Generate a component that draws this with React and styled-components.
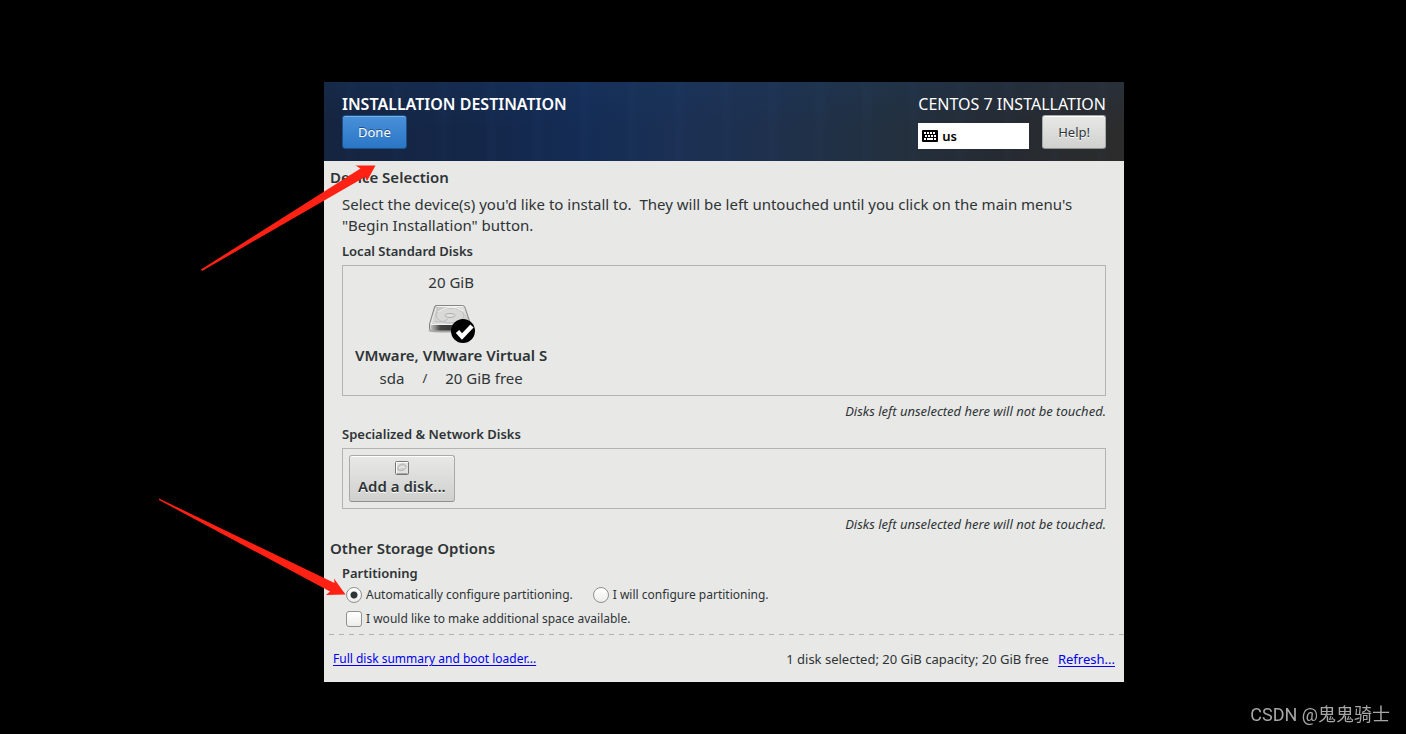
import React, { useState } from "react";
import styled, { createGlobalStyle } from "styled-components";

function DiskIcon() {
  return (
    <svg width="48" height="40" viewBox="0 0 48 40" aria-hidden="true">
      <defs>
        <linearGradient id="diskTop" x1="0" y1="0" x2="1" y2="1">
          <stop offset="0" stopColor="#b9b9b8" />
          <stop offset="0.5" stopColor="#e2e2e1" />
          <stop offset="1" stopColor="#b5b5b4" />
        </linearGradient>
        <linearGradient id="diskFront" x1="0" y1="0" x2="1" y2="0">
          <stop offset="0" stopColor="#c4c4c4" />
          <stop offset="0.12" stopColor="#8a8a8a" />
          <stop offset="0.25" stopColor="#444" />
          <stop offset="0.5" stopColor="#3a3a3a" />
          <stop offset="1" stopColor="#8a8a8a" />
        </linearGradient>
      </defs>
      <ellipse cx="23" cy="28" rx="22" ry="2" fill="#000" opacity="0.15" />
      <path d="M9 2.5H35.5Q37 2.5 37.8 4L43.5 21V26Q43.5 28 41.5 28H4.5Q2.5 28 2.5 26V21L7.5 4Q8 2.5 9 2.5Z" fill="url(#diskTop)" stroke="#858585" />
      <path d="M3.5 22H43V26Q43 27.5 41.5 27.5H5Q3.5 27.5 3.5 26Z" fill="url(#diskFront)" />
      <path d="M9.5 3.5H35.5" stroke="#fff" opacity="0.8" />
      <path d="M9 5L4 21.5H42" fill="none" stroke="#f0f0f0" />
      <ellipse cx="23" cy="12.5" rx="14" ry="7.5" fill="#d9d9d8" stroke="#bdbdbd" />
      <path d="M11 9Q23 0 36 8" fill="none" stroke="#f4f4f4" />
      <ellipse cx="23" cy="12.5" rx="5" ry="2" fill="#e2e2e2" stroke="#adadad" />
      <path d="M8 18Q15 21 21 16" fill="none" stroke="#bbb" />
      <circle cx="36" cy="28" r="12" fill="#000" />
      <path d="M30.5 28.5L35 33.5L45 23" fill="none" stroke="#fff" strokeWidth="4.5" />
    </svg>
  );
}

function SmallDiskIcon() {
  return (
    <svg width="16" height="16" viewBox="0 0 16 16" aria-hidden="true">
      <rect x="1.5" y="1.5" width="13" height="13" rx="1" fill="#e2e2e1" stroke="#777" />
      <path d="M2.5 13.5V2.5H13.5" fill="none" stroke="#fff" />
      <path d="M3 13.5H13.5" stroke="#a5a5a5" />
      <path d="M4 10C3 6 6 4 9 4C12 4 13 7 11 9C9 11 6 11 4 10Z" fill="#d0d0cf" stroke="#b5b5b5" />
      <path d="M5 8L9 6.5L11 8" fill="none" stroke="#f7f7f7" />
    </svg>
  );
}

function KeyboardIcon() {
  return (
    <svg width="16" height="12" viewBox="0 0 16 12" aria-hidden="true">
      <rect width="16" height="12" rx="1" fill="#000" />
      <path
        d="M2 2h2v2H2zM5 2h2v2H5zM8 2h2v2H8zM11 2h2v2h-2zM3 5h2v2H3zM6 5h2v2H6zM9 5h2v2H9zM12 5h2v2h-2zM2 8h2v2H2zM5 8h6v2H5zM12 8h2v2h-2z"
        fill="#fff"
        shapeRendering="crispEdges"
      />
    </svg>
  );
}

function App() {
  const [mode, setMode] = useState("auto");
  const [extraSpace, setExtraSpace] = useState(false);

  return (
    <Page>
      <GlobalStyle />
      <Installer>
        <Header>
          <HeaderSide>
            <ScreenTitle>INSTALLATION DESTINATION</ScreenTitle>
            <Button $primary>Done</Button>
          </HeaderSide>
          <HeaderSide>
            <ProductName>CENTOS 7 INSTALLATION</ProductName>
            <HeaderTools>
              <Keyboard>
                <KeyboardIcon />
                us
              </Keyboard>
              <Button>Help!</Button>
            </HeaderTools>
          </HeaderSide>
        </Header>

        <Content>
          <Heading>Device Selection</Heading>
          <Intro>
            Select the device(s) you'd like to install to.&nbsp; They will be left untouched until you click on the main menu's "Begin Installation" button.
          </Intro>
          <SubHeading>Local Standard Disks</SubHeading>
          <DiskList>
            <Disk>
              <span>20 GiB</span>
              <DiskIcon />
              <DiskName>VMware, VMware Virtual S</DiskName>
              <DiskInfo>
                <span>sda</span>
                <Slash>/</Slash>
                <span>20 GiB free</span>
              </DiskInfo>
            </Disk>
          </DiskList>
          <Note>Disks left unselected here will not be touched.</Note>
          <SubHeading>Specialized &amp; Network Disks</SubHeading>
          <DiskList $tight>
            <AddDisk>
              <SmallDiskIcon />
              Add a disk...
            </AddDisk>
          </DiskList>
          <Note>Disks left unselected here will not be touched.</Note>

          <Heading>Other Storage Options</Heading>
          <SubHeading>Partitioning</SubHeading>
          <Options>
            <Option>
              <Tick type="radio" name="mode" checked={mode === "auto"} onChange={() => setMode("auto")} />
              Automatically configure partitioning.
            </Option>
            <Option>
              <Tick type="radio" name="mode" checked={mode === "manual"} onChange={() => setMode("manual")} />
              I will configure partitioning.
            </Option>
          </Options>
          <Options>
            <Option>
              <Tick type="checkbox" checked={extraSpace} onChange={(e) => setExtraSpace(e.target.checked)} />
              I would like to make additional space available.
            </Option>
          </Options>
        </Content>

        <Divider />
        <Footer>
          <Link href="#summary">Full disk summary and boot loader...</Link>
          <Status>
            <span>1 disk selected; 20 GiB capacity; 20 GiB free</span>
            <Link href="#refresh">Refresh...</Link>
          </Status>
        </Footer>

        {/* both arrows start outside the installer and point into it */}
        <Arrows viewBox="0 0 230 520" aria-hidden="true">
          <path d="M42 187.5L201.5 86.5L196.5 83.5H216.5L208 99L206 95L43 189Z" />
          <path d="M0 416.5L175.5 501L175 496.500L186.500 512.500L167 513L171 509.500L0 418Z" />
        </Arrows>
      </Installer>
      <Watermark>CSDN @鬼鬼骑士</Watermark>
    </Page>
  );
}

const GlobalStyle = createGlobalStyle`
  * {
    box-sizing: border-box;
  }

  body {
    margin: 0;
    background-color: #000;
  }
`;

const Page = styled.div`
  min-height: 100vh;
  display: flex;
  justify-content: center;
  align-items: flex-start;
  padding: 82px 0 52px 42px;
  background-color: #000;
  color: #2e3436;
  font-family: "Noto Sans", "Open Sans", sans-serif;
  font-size: 15px;
  line-height: 21px;
`;

const Installer = styled.main`
  position: relative;
  width: 100%;
  max-width: 800px;
  background-color: #e8e8e6;
`;

const Header = styled.header`
  display: flex;
  justify-content: space-between;
  padding: 12px 18px;
  color: #fff;
  background:
    repeating-linear-gradient(90deg, transparent 0 19px, rgba(60, 110, 180, 0.03) 24px 27px, transparent 34px 47px),
    linear-gradient(180deg, rgba(24, 64, 110, 0.2), transparent 60%),
    linear-gradient(90deg, #15243f 0%, #14274a 20%, #142c55 32%, #1b3053 45%, #1e304d 55%, #22303f 70%, #262a31 85%, #2c2c2c 100%);
`;

const HeaderSide = styled.div`
  display: flex;
  flex-direction: column;
  align-items: flex-start;
  gap: 1px;
`;

const ScreenTitle = styled.h1`
  margin: 0;
  font-size: 16px;
  line-height: 20px;
  font-weight: 600;
`;

const ProductName = styled.div`
  font-size: 16px;
  line-height: 20px;
`;

const HeaderTools = styled.div`
  width: 100%;
  display: flex;
  align-items: flex-end;
  gap: 13px;
`;

const Keyboard = styled.div`
  flex: 1;
  height: 26px;
  display: flex;
  align-items: center;
  gap: 4px;
  padding: 0 4px;
  background-color: #fff;
  color: #000;
  font-size: 13px;
  font-weight: 600;
`;

const Button = styled.button`
  height: 34px;
  padding: 0 15px;
  border: 1px solid ${(props) => (props.$primary ? "#1c5187" : "#a7aba7")};
  border-bottom-color: ${(props) => (props.$primary ? "#1c5187" : "#8e918e")};
  border-radius: 3px;
  background: ${(props) =>
    props.$primary ? "linear-gradient(#4a90d9, #2a76c6)" : "linear-gradient(#e8e8e7, #d0d0cf)"};
  box-shadow: inset 0 1px ${(props) => (props.$primary ? "#76b0ec" : "#fff")};
  color: ${(props) => (props.$primary ? "#fff" : "#2e3436")};
  font-family: inherit;
  font-size: 13px;
  line-height: 20px;
  text-shadow: ${(props) => (props.$primary ? "0 -1px #1c5187" : "0 1px #fff")};
`;

const Content = styled.div`
  padding: 5px 18px 3px;
`;

const Heading = styled.h2`
  margin: 3px 0 4px -12px;
  font-size: 15px;
  line-height: 22px;
  font-weight: 600;

  &:first-child {
    margin-top: 0;
  }
`;

const Intro = styled.p`
  margin: 0 0 5px;
  padding-top: 2px;
`;

const SubHeading = styled.h3`
  margin: 0;
  font-size: 13px;
  line-height: 20px;
  font-weight: 600;
`;

const DiskList = styled.div`
  display: flex;
  margin: 4px 0 5px;
  padding: ${(props) => (props.$tight ? "6px" : "6px 12px 5px")};
  border: 1px solid #b3b3b1;
`;

const Disk = styled.div`
  display: flex;
  flex-direction: column;
  align-items: center;

  svg {
    margin: 10px 0 1px;
  }
`;

const DiskName = styled.strong`
  font-weight: 600;
  line-height: 23px;
`;

const DiskInfo = styled.div`
  display: flex;
  gap: 18px;
  line-height: 23px;
`;

const Slash = styled.span`
  font-size: 13px;
`;

const AddDisk = styled(Button)`
  height: 47px;
  padding: 4px 8px;
  display: flex;
  flex-direction: column;
  align-items: center;
  font-size: 15px;
  line-height: 21px;
  font-weight: 600;
`;

const Note = styled.p`
  margin: 0 0 3px;
  font-size: 13px;
  line-height: 20px;
  font-style: italic;
  text-align: right;
`;

const Options = styled.div`
  display: flex;
  gap: 20px;
  padding: 2px 4px;
`;

const Option = styled.label`
  display: flex;
  align-items: center;
  gap: 4px;
  font-size: 12px;
  line-height: 20px;
`;

const Tick = styled.input`
  appearance: none;
  width: 16px;
  height: 16px;
  margin: 0;
  border: 1px solid #8f918e;
  border-radius: ${(props) => (props.type === "radio" ? "50%" : "3px")};
  background: linear-gradient(#fff, #ededec);

  &:checked {
    background: radial-gradient(circle, #2e3436 0 3px, transparent 4px), linear-gradient(#fff, #ededec);
  }
`;

const Divider = styled.div`
  height: 1px;
  margin-left: 5px;
  background: repeating-linear-gradient(90deg, #b3b3b1 0 5px, transparent 5px 10px);
`;

const Footer = styled.footer`
  display: flex;
  justify-content: space-between;
  padding: 14px 9px 13px;
  font-size: 12px;
  line-height: 20px;
`;

const Status = styled.div`
  display: flex;
  gap: 9px;
  font-size: 13px;
`;

const Link = styled.a`
  color: #0000ee;
  text-decoration: underline;
  text-underline-offset: 2px;
`;

const Arrows = styled.svg`
  position: absolute;
  top: 0;
  left: -165px;
  width: 230px;
  height: 520px;
  fill: #ff2113;
  pointer-events: none;
`;

const Watermark = styled.div`
  position: fixed;
  right: 16px;
  bottom: 6px;
  color: #a6a6a6;
  font-family: Roboto, "Noto Sans CJK SC", sans-serif;
  font-size: 18px;
  line-height: 26px;
`;

export default App;
